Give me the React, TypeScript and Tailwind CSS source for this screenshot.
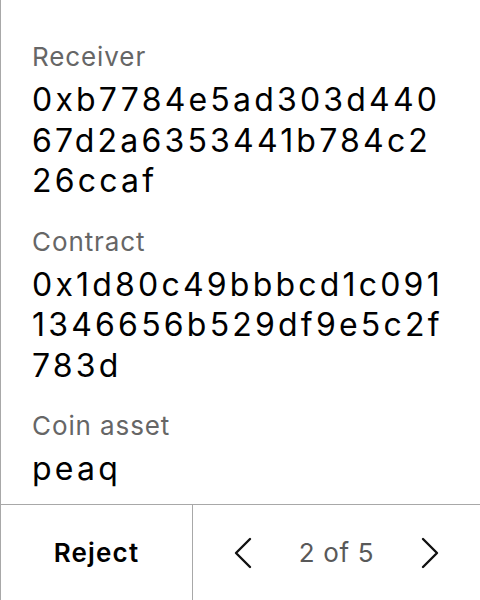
import React from "react";

const FIELDS = [
  { label: "Receiver", value: "0xb7784e5ad303d44067d2a6353441b784c226ccaf" },
  { label: "Contract", value: "0x1d80c49bbbcd1c0911346656b529df9e5c2f783d" },
  { label: "Coin asset", value: "peaq" },
];

const Chevron = ({ dir }: { dir: "left" | "right" }) => (
  <svg width="18" height="32" viewBox="0 0 18 32" fill="none" stroke="#111" strokeWidth="2.4" strokeLinecap="round" strokeLinejoin="round">
    {dir === "left" ? <path d="M16 2 L2 16 L16 30" /> : <path d="M2 2 L16 16 L2 30" />}
  </svg>
);

export default function App() {
  return (
    <div className="w-[480px] h-[600px] flex flex-col bg-white border-l border-[#a8a8a8] font-['Inter',sans-serif] text-black">
      {/* details */}
      <div className="flex-1 flex flex-col gap-[24px] pl-[31px] pr-[31px] pt-[41px]">
        {FIELDS.map((f) => (
          <div key={f.label} className="flex flex-col">
            <div className="text-[26px] leading-[32px] tracking-[0.9px] text-[#666]">{f.label}</div>
            <div className="mt-[7px] text-[32px] leading-[40.5px] tracking-[3.2px] break-all">{f.value}</div>
          </div>
        ))}
      </div>

      {/* footer */}
      <div className="h-[96px] flex border-t border-[#a8a8a8]">
        <button className="w-[192px] border-r border-[#a8a8a8] flex items-center justify-center text-[26px] font-semibold tracking-[1.2px]">
          Reject
        </button>
        <div className="flex-1 flex items-center justify-center gap-[47px]">
          <Chevron dir="left" />
          <span className="text-[26px] tracking-[0.7px] text-[#595959]">2 of 5</span>
          <Chevron dir="right" />
        </div>
      </div>
    </div>
  );
}
